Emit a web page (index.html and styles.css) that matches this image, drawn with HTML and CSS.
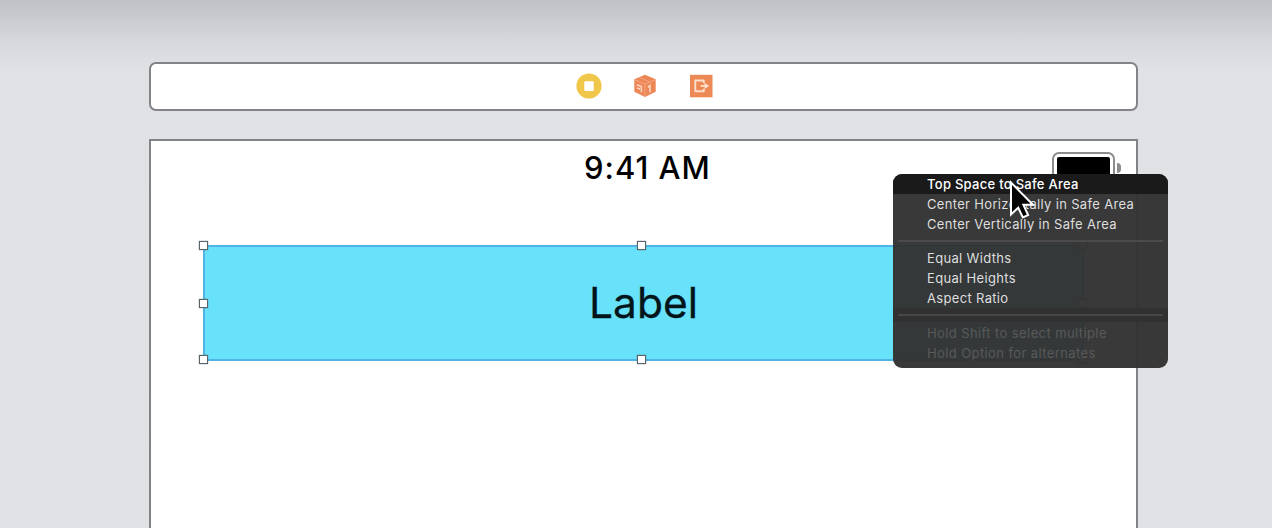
FILE: index.html
```html
<!DOCTYPE html>
<html lang="en">
<head>
<meta charset="utf-8">
<title>Interface Builder</title>
<link rel="stylesheet" href="styles.css">
</head>
<body>
<main class="canvas">
  <header class="dock">
    <svg class="dock-icon" viewBox="0 0 26 26"><circle cx="13" cy="13" r="12.6" fill="#f0c64b"/><rect x="8.3" y="8.3" width="9.4" height="9.8" rx="1" fill="#fff"/></svg>
    <svg class="dock-icon" viewBox="0 0 26 26"><path d="M13 1.7 23.7 6.2v12.5L13 24 2.3 18.7V6.2z" fill="#ed8655"/><path d="M2.8 6.8 13 11.3l10.2-4.5M13 11.3v12M7.3 4.5l10.5 4.6" fill="none" stroke="#f5aa87" stroke-width=".9"/><path d="M4.8 11.7l4.6 1.9v5.6M5 15l3 .9M16 14.3l2-1.8v7" fill="none" stroke="#fbd6c2" stroke-width="1.6"/></svg>
    <svg class="dock-icon" viewBox="0 0 26 26"><path d="M2 1.8h22.5v22.5H2z" fill="#ed8955"/><path d="M15.8 10V7.5H7.3v10.7h8.5v-2.5M12.5 12.9h5" fill="none" stroke="#fde0cc" stroke-width="1.9" stroke-linejoin="round"/><path d="M16.5 9.7l4.7 3.2-4.7 3.2z" fill="#fde0cc"/></svg>
  </header>
  <section class="device">
    <div class="status">
      <span class="time">9:41 AM</span>
      <div class="battery"><div class="charge"></div></div>
    </div>
    <div class="label-view">
      <span class="label-text">Label</span>
      <i class="handle left top"></i><i class="handle center top"></i><i class="handle right top"></i>
      <i class="handle left middle"></i><i class="handle right middle"></i>
      <i class="handle left bottom"></i><i class="handle center bottom"></i><i class="handle right bottom"></i>
    </div>
  </section>
  <nav class="menu">
    <div class="item active"><span>Top Space to Safe Area</span></div>
    <div class="item"><span>Center Horizontally in Safe Area</span></div>
    <div class="item"><span>Center Vertically in Safe Area</span></div>
    <div class="separator"></div>
    <div class="item"><span>Equal Widths</span></div>
    <div class="item"><span>Equal Heights</span></div>
    <div class="item"><span>Aspect Ratio</span></div>
    <div class="separator strong"></div>
    <div class="item hint"><span>Hold Shift to select multiple</span></div>
    <div class="item hint"><span>Hold Option for alternates</span></div>
  </nav>
  <svg class="cursor" viewBox="0 0 28 42"><path d="M3 3.5v32l7.2-6.8 4.6 9.8 5.3-2.4-4.7-10.3h9.6z" fill="#050505" stroke="#fff" stroke-width="2"/></svg>
</main>
</body>
</html>
```
FILE: styles.css
```css
* { box-sizing: border-box; }
body { margin: 0; font-family: Inter, "Liberation Sans", sans-serif; }
.canvas {
  position: relative;
  height: 528px;
  overflow: hidden;
  padding: 62px 134px 0 149px;
  background: linear-gradient(#bfc1c4 0, #c4c6c9 10px, #d5d6da 38px, #e0e1e5 68px, #e1e2e6 100%);
}
.dock {
  display: flex;
  align-items: center;
  justify-content: center;
  gap: 30px;
  height: 49px;
  padding: 0 0 2px 3px;
  border: 2px solid #828386;
  border-radius: 7px;
  background: #fff;
}
.dock-icon { width: 26px; height: 26px; }
.device {
  height: 420px;
  margin-top: 28px;
  border: 2px solid #828386;
  background: #fff;
}
.status {
  display: grid;
  grid-template-columns: 433px 1fr auto;
  height: 104px;
  padding-right: 21px;
}
.time {
  grid-column: 2;
  margin-top: 8px;
  font-size: 31px;
  line-height: 38px;
  font-weight: 500;
  letter-spacing: 1px;
  white-space: nowrap;
}
.battery {
  position: relative;
  width: 63px;
  height: 31px;
  margin-top: 11px;
  padding: 3px;
  border: 2px solid #8c8c8c;
  border-radius: 7px;
}
.battery::after {
  content: "";
  position: absolute;
  left: 63px;
  top: 9px;
  width: 4px;
  height: 10px;
  border-radius: 0 5px 5px 0;
  background: #8c8c8c;
}
.charge { height: 100%; border-radius: 2px; background: #000; }
.label-view {
  position: relative;
  display: flex;
  align-items: center;
  justify-content: center;
  width: 881px;
  height: 116px;
  margin-left: 52px;
  border: 2px solid #4fb3e6;
  background: #68e1fa;
}
.label-text { font-size: 42.5px; line-height: 52px; color: #03151a; -webkit-text-stroke: .3px #03151a; }
.handle {
  position: absolute;
  width: 9px;
  height: 9px;
  border: 1.5px solid #59646a;
  background: #fff;
  box-shadow: 0 0 1px #59646a;
}
.left { left: -6px; }
.center { left: 432px; }
.right { right: -5px; }
.top { top: -6px; }
.middle { top: 52px; }
.bottom { bottom: -5px; }
.menu {
  position: absolute;
  left: 893px;
  top: 174px;
  width: 275px;
  height: 194px;
  overflow: hidden;
  border-radius: 9px;
  background: rgba(50, 50, 50, .965);
  color: #dedede;
  font-size: 13px;
  letter-spacing: .33px;
}
.item { height: 20px; padding-left: 34px; line-height: 21px; white-space: nowrap; }
.active { background: #1a1a1a; color: #fff; font-weight: 500; letter-spacing: .28px; }
.separator { height: 2px; margin: 6px 5px; background: #4b4b4b; }
.strong { box-shadow: 0 0 0 6px #313131; background: #474747; }
.hint { color: #585a5a; letter-spacing: .4px; line-height: 22px; }
.cursor { position: absolute; left: 1008px; top: 179px; width: 28px; height: 42px; }
```
